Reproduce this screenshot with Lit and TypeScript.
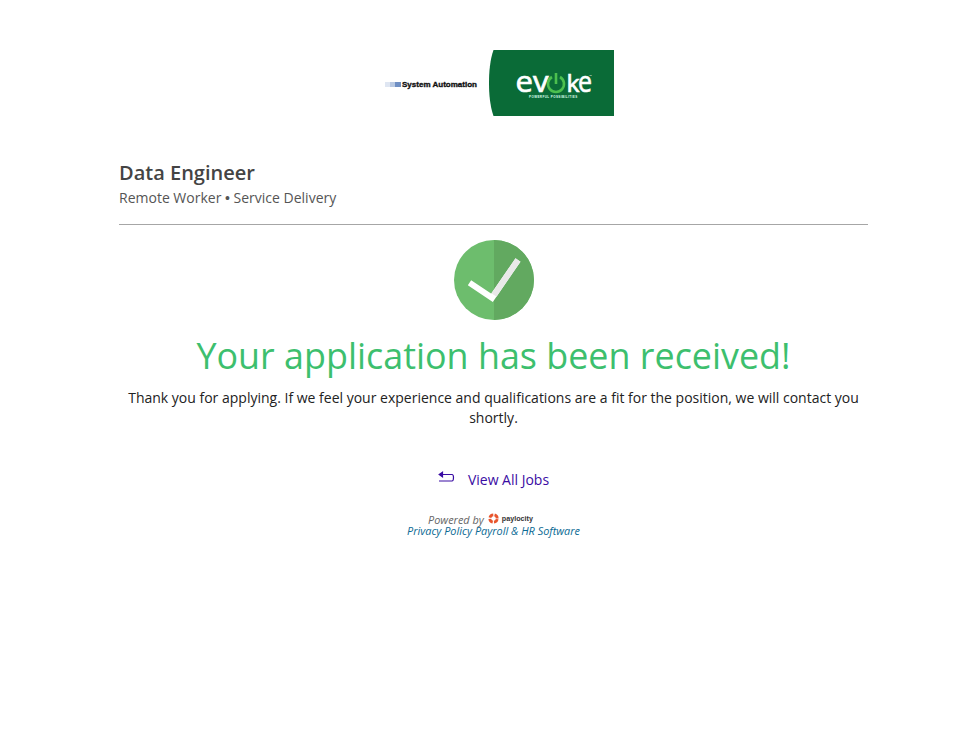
import { LitElement, html, css } from "lit";
import { customElement } from "lit/decorators.js";

@customElement("app-root")
export class AppRoot extends LitElement {
  static styles = css`
    :host { display: block; font-family: "Open Sans", sans-serif; color: #333; background: #fff; min-height: 750px; }
    .page { padding: 50px 104px 0 119px; display: flex; flex-direction: column; }
    .logo { display: flex; justify-content: center; height: 66px; padding-left: 12px; }
    .logo svg { display: block; }
    .sa { font-family: "Liberation Sans", sans-serif; font-weight: 700; font-size: 8px; fill: #111; stroke: #111; stroke-width: 0.35px; }
    .ev { font-family: "Open Sans", sans-serif; font-size: 30px; fill: #fff; stroke: #fff; stroke-width: 0.7px; }
    .kk { font-family: "Open Sans", sans-serif; font-size: 23px; fill: #fff; stroke: #fff; stroke-width: 0.7px; }
    .tag { font-family: "Liberation Sans", sans-serif; font-size: 3px; font-weight: 700; fill: #dfe; letter-spacing: 0.42px; }
    .tm { font-family: "Liberation Sans", sans-serif; font-size: 3px; fill: #fff; }
    .job { margin-top: 45px; }
    h1 { margin: 0; font-size: 20px; line-height: 24px; font-weight: 600; color: #444; }
    .sub { font-size: 14px; line-height: 20px; margin-top: 3px; color: #555; }
    .dot { font-family: "Liberation Sans", sans-serif; font-size: 14px; }
    hr { border: 0; border-top: 1px solid #a6a6a6; margin: 16px 0 15px; width: 100%; }
    .check { display: flex; justify-content: center; }
    .check svg { display: block; }
    h2 { margin: 13px 0 0; text-align: center; font-size: 35.88px; line-height: 46px; font-weight: 400; color: #3dbf6e; }
    .thanks { margin: 9px 0 0; text-align: center; font-size: 14px; line-height: 20px; color: #222; }
    .back { display: flex; justify-content: center; align-items: center; gap: 13px; margin-top: 41px; height: 20px; color: #3a0ca3; font-size: 14px; text-decoration: none; }
    .back svg { display: block; margin-top: -5px; }
    .foot { margin-top: 25px; display: flex; flex-direction: column; align-items: center; font-size: 10.9px; line-height: 11px; font-style: italic; }
    .pw { display: flex; align-items: center; gap: 3px; color: #666; padding-right: 26px; }
    .pl { font-style: normal; font-weight: 700; font-size: 7.2px; color: #333; font-family: "Liberation Sans", sans-serif; margin-top: -2px; }
    .pw svg { display: block; margin-left: 1px; margin-top: -2px; }
    .links { color: #0b6a94; display: flex; gap: 3px; }
    .links a { color: inherit; text-decoration: none; }
  `;

  render() {
    return html`
      <div class="page">
        <div class="logo">
          <svg width="230" height="66" viewBox="0 0 230 66" role="img" aria-label="System Automation and Evoke logo">
            <rect x="0" y="32" width="5" height="5" fill="#dfe6f2"></rect>
            <rect x="5" y="32" width="5" height="5" fill="#b9c9e2"></rect>
            <rect x="10" y="32" width="6" height="5" fill="#6f8fc4"></rect>
            <text class="sa" x="17" y="37" textLength="75">System Automation</text>
            <path d="M108.500 0H229V66H108.500C105 56 104 44 104 33C104 22 105 10 108.500 0Z" fill="#0a6b37"></path>
            <text class="ev" x="130.500" y="42" textLength="33" lengthAdjust="spacingAndGlyphs">ev</text>
            <path d="M167 27A8 8 0 1 0 175 27" fill="none" stroke="#4cc04f" stroke-width="2.600"></path>
            <path d="M171 23V34" fill="none" stroke="#4cc04f" stroke-width="2.600"></path>
            <text class="kk" x="181.500" y="42" textLength="13" lengthAdjust="spacingAndGlyphs">k</text>
            <text class="ev" x="193" y="42" textLength="14" lengthAdjust="spacingAndGlyphs">e</text>
            <text class="tm" x="204" y="27">™</text>
            <text class="tag" x="144" y="47.500">POWERFUL POSSIBILITIES</text>
          </svg>
        </div>
        <div class="job">
          <h1>Data Engineer</h1>
          <div class="sub">Remote Worker <span class="dot">•</span> Service Delivery</div>
        </div>
        <hr />
        <div class="check">
          <svg width="80" height="80" viewBox="0 0 80 80" role="img" aria-label="Success">
            <circle cx="40" cy="40" r="40" fill="#6dbd6d"></circle>
            <path d="M40 0A40 40 0 0 1 40 80Z" fill="#62a960"></path>
            <path d="M15.500 42.700L38 57.800L64 20" fill="none" stroke="#fff" stroke-width="6"></path>
            <path d="M40 55L64 20" fill="none" stroke="#e9e9e9" stroke-width="6"></path>
          </svg>
        </div>
        <h2>Your application has been received!</h2>
        <p class="thanks">Thank you for applying. If we feel your experience and qualifications are a fit for the position, we will contact you shortly.</p>
        <a class="back" href="#">
          <svg width="17" height="12" viewBox="0 0 17 12" fill="none" stroke="#3a0ca3" stroke-width="1.200">
            <path d="M2 3.500H14C15.300 3.500 15.500 4.500 15.500 6.500C15.500 9 15.300 10 14 10H1"></path>
            <path d="M4.500 1.200L1.200 3.500L4.500 5.800Z" fill="#3a0ca3"></path>
          </svg>
          <span>View All Jobs</span>
        </a>
        <div class="foot">
          <div class="pw">
            <span>Powered by</span>
            <svg width="11" height="11" viewBox="0 0 11 11">
              <circle cx="5.500" cy="5.500" r="3.700" fill="none" stroke="#e8552d" stroke-width="2.800" stroke-dasharray="4.510 1.300" stroke-dashoffset="-0.650"></circle>
            </svg>
            <span class="pl">paylocity</span>
          </div>
          <div class="links"><a href="#">Privacy Policy</a><a href="#">Payroll &amp; HR Software</a></div>
        </div>
      </div>
    `;
  }
}
